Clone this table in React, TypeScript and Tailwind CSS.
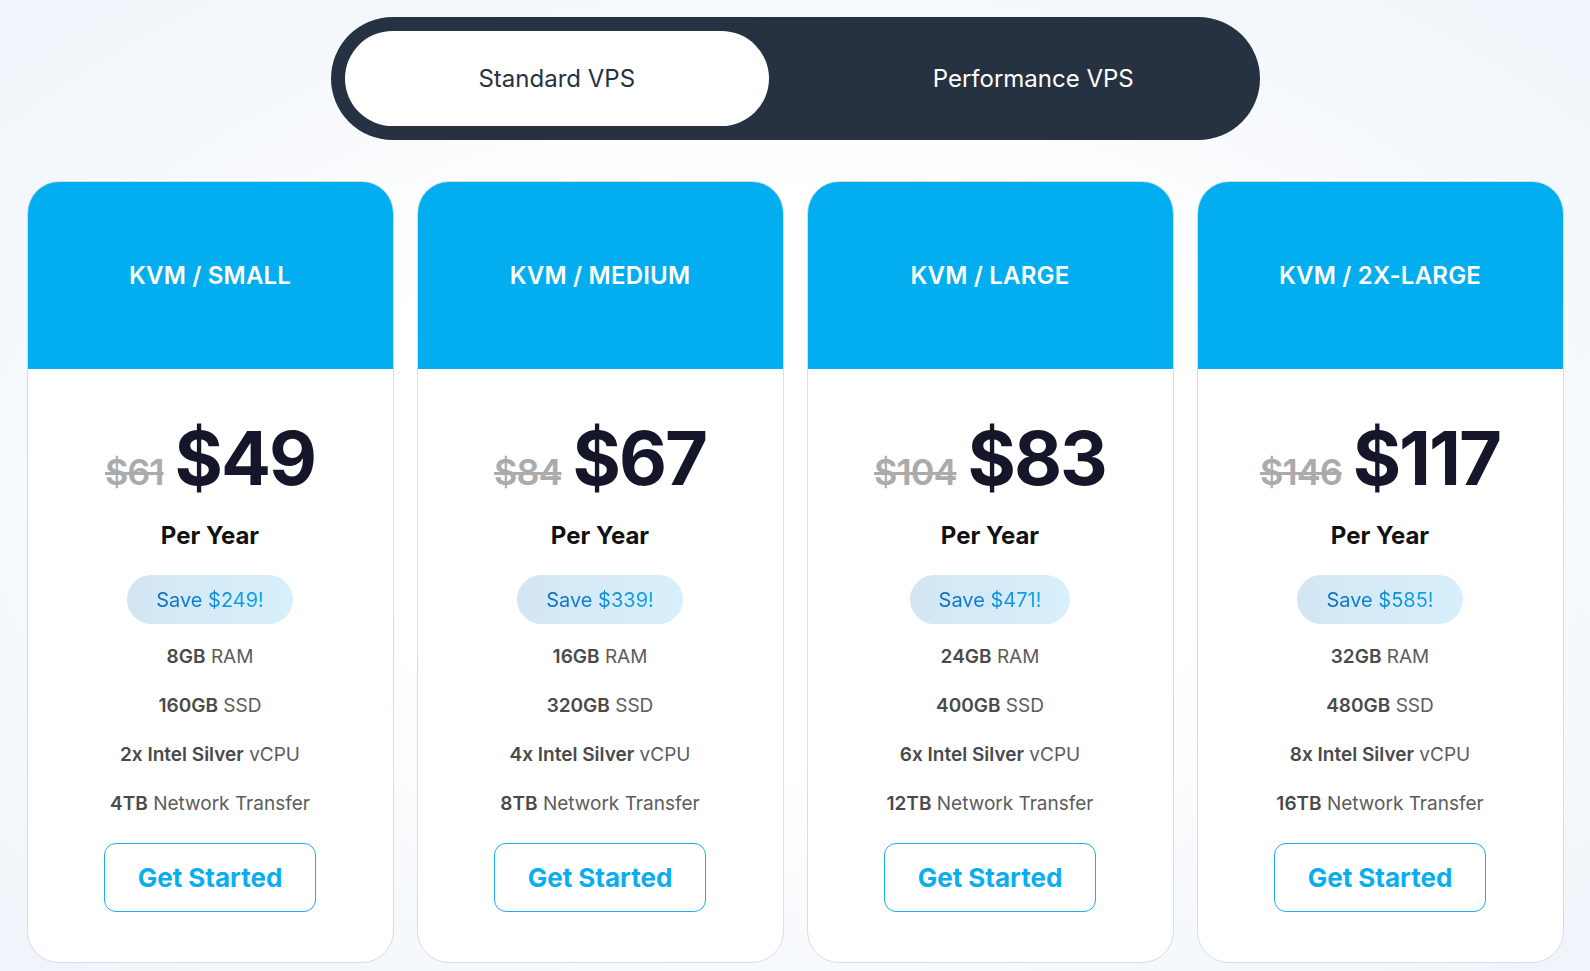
const plans = [
  { name: "KVM / SMALL", old: "$61", price: "$49", save: "$249", ram: "8GB", ssd: "160GB", cpu: "2x", bw: "4TB" },
  { name: "KVM / MEDIUM", old: "$84", price: "$67", save: "$339", ram: "16GB", ssd: "320GB", cpu: "4x", bw: "8TB" },
  { name: "KVM / LARGE", old: "$104", price: "$83", save: "$471", ram: "24GB", ssd: "400GB", cpu: "6x", bw: "12TB" },
  { name: "KVM / 2X-LARGE", old: "$146", price: "$117", save: "$585", ram: "32GB", ssd: "480GB", cpu: "8x", bw: "16TB" },
];

function Feature({ bold, rest }: { bold: string; rest: string }) {
  return (
    <div className="h-[49px] flex items-center justify-center text-[19px] text-[#5c5c5c]">
      <span className="font-semibold text-[#4a4a4a]">{bold}</span>&nbsp;{rest}
    </div>
  );
}

function Card({ p }: { p: (typeof plans)[number] }) {
  return (
    <div className="w-[367px] h-[782px] bg-white rounded-[32px] border border-[#d9dde2] overflow-hidden flex flex-col">
      <div className="h-[187px] bg-[#02aeef] flex items-center justify-center">
        <span className="text-white text-[24px] font-semibold tracking-[0.2px]">{p.name}</span>
      </div>
      <div className="flex flex-col items-center pt-[52px]">
        <div className="flex items-baseline gap-[11px] leading-none">
          <span className="text-[36px] font-semibold text-[#ababab] line-through tracking-[-1px]">{p.old}</span>
          <span className="text-[74px] font-bold text-[#16162b] tracking-[-2px]">{p.price}</span>
        </div>
        <div className="mt-[29px] text-[24px] leading-none font-bold text-[#111]">Per Year</div>
        <div className="mt-[27px] h-[49px] px-[29px] rounded-full bg-gradient-to-r from-[#d3e5f3] to-[#d8f0fb] flex items-center">
          <span className="text-[20px] bg-gradient-to-r from-[#0a6cbf] to-[#14a6ea] bg-clip-text text-transparent">
            Save {p.save}!
          </span>
        </div>
        <div className="mt-[9px] flex flex-col">
          <Feature bold={p.ram} rest="RAM" />
          <Feature bold={p.ssd} rest="SSD" />
          <Feature bold={`${p.cpu} Intel Silver`} rest="vCPU" />
          <Feature bold={p.bw} rest="Network Transfer" />
        </div>
        <button className="mt-[14px] w-[212px] h-[69px] rounded-[12px] border border-[#19aeea] bg-white text-[#0aaeef] text-[26px] font-bold">
          Get Started
        </button>
      </div>
    </div>
  );
}

export default function App() {
  return (
    <div
      className="w-[1590px] h-[971px] overflow-hidden bg-[radial-gradient(ellipse_at_center,#ffffff_40%,#eef4fa_100%)]"
      style={{ fontFamily: "Inter, 'Noto Sans', sans-serif" }}
    >
      <div className="flex justify-center pt-[17px]">
        <div className="w-[929px] h-[123px] rounded-full bg-[#263241] p-[14px] flex items-stretch gap-[52px]">
          <button className="w-[425px] rounded-full bg-white text-[#263241] text-[24px]">Standard VPS</button>
          <button className="w-[425px] rounded-full text-white text-[24px]">Performance VPS</button>
        </div>
      </div>
      <div className="flex justify-center gap-[23px] mt-[41px]">
        {plans.map((p) => (
          <Card key={p.name} p={p} />
        ))}
      </div>
    </div>
  );
}
